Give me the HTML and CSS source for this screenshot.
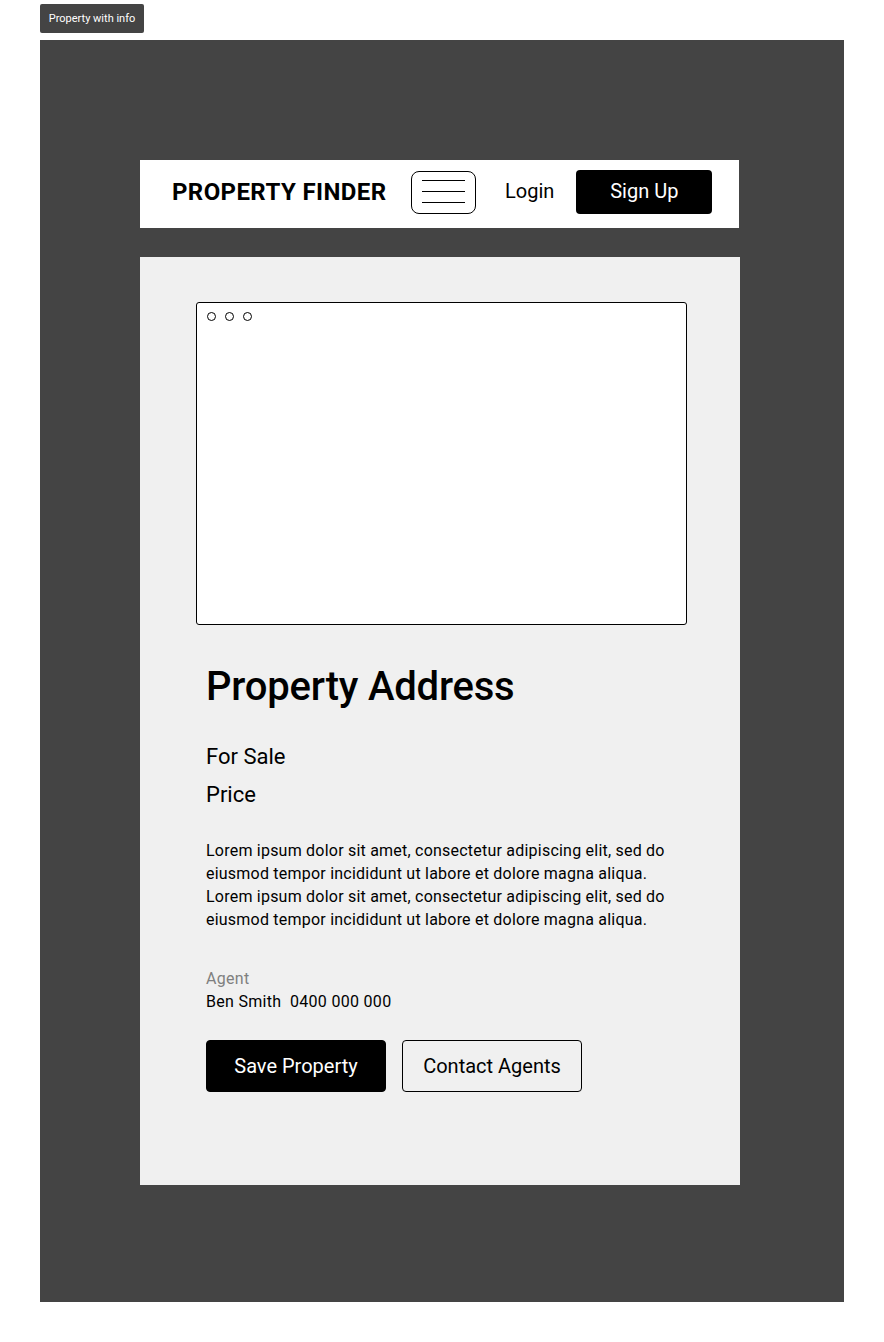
FILE: index.html
```html
<!DOCTYPE html>
<html lang="en">

<head>
  <meta charset="UTF-8" />
  <title>Property with info</title>
  <link rel="stylesheet" href="styles.css">
</head>

<body>
  <div class="tag">Property with info</div>
  <div class="frame">
    <!-- top bar -->
    <div class="header">
      <div class="logo">PROPERTY FINDER</div>
      <div class="menu">
        <span></span><span></span><span></span>
      </div>
      <div class="login">Login</div>
      <div class="signup">Sign Up</div>
    </div>

    <!-- property card -->
    <div class="card">
      <div class="photo">
        <div class="dots"><i></i><i></i><i></i></div>
      </div>
      <div class="info">
        <h1 class="title">Property Address</h1>
        <p class="status">For Sale</p>
        <p class="price">Price</p>
        <p class="desc">Lorem ipsum dolor sit amet, consectetur adipiscing elit, sed do eiusmod tempor incididunt ut labore et dolore magna aliqua.<br>Lorem ipsum dolor sit amet, consectetur adipiscing elit, sed do eiusmod tempor incididunt ut labore et dolore magna aliqua.</p>
        <p class="agent-label">Agent</p>
        <p class="agent">Ben Smith&nbsp; 0400 000 000</p>
        <div class="actions">
          <div class="btn btn-dark">Save Property</div>
          <div class="btn btn-line">Contact Agents</div>
        </div>
      </div>
    </div>
  </div>
</body>

</html>
```

FILE: styles.css
```css
* {
  padding: 0;
  margin: 0;
  box-sizing: border-box;
}

body {
  font-family: Roboto, "Liberation Sans", sans-serif;
  color: #000;
  background: #fff;
}

.tag {
  width: 104px;
  height: 29px;
  margin: 4px 0 0 40px;
  background: #444;
  border-radius: 2px;
  color: #fff;
  font-size: 11px;
  line-height: 29px;
  text-align: center;
}

.frame {
  width: 804px;
  height: 1262px;
  margin: 7px 0 0 40px;
  padding: 120px 0 0 100px;
  background: #444;
}

/* header */
.header {
  width: 599px;
  height: 68px;
  background: #fff;
  display: flex;
  align-items: center;
  padding: 0 0 4px 32px;
}

.logo {
  font-size: 24px;
  font-weight: bold;
  letter-spacing: 0.4px;
  width: 239px;
  white-space: nowrap;
}

.menu {
  width: 65px;
  height: 43px;
  border: 1.5px solid #000;
  border-radius: 8px;
  display: flex;
  flex-direction: column;
  align-items: center;
  padding-top: 8px;
  gap: 10px;
}

.menu span {
  display: block;
  width: 43px;
  height: 1px;
  background: #000;
}

.login {
  margin-left: 29px;
  font-size: 20px;
  margin-top: -3px;
}

.signup {
  width: 136px;
  height: 44px;
  margin-left: 22px;
  background: #000;
  border-radius: 4px;
  color: #fff;
  font-size: 20px;
  line-height: 42px;
  text-align: center;
}

/* card */
.card {
  width: 600px;
  height: 928px;
  margin-top: 29px;
  background: #f0f0f0;
  padding: 45px 0 0 56px;
}

.photo {
  width: 491px;
  height: 323px;
  background: #fff;
  border: 1px solid #000;
  border-radius: 3px;
}

.dots {
  display: flex;
  gap: 9px;
  padding: 9px 0 0 10px;
}

.dots i {
  display: block;
  width: 9px;
  height: 9px;
  border: 1.3px solid #000;
  border-radius: 50%;
}

.info {
  padding-left: 10px;
  width: 490px;
}

.title {
  margin-top: 38px;
  font-size: 40px;
  font-weight: 500;
  letter-spacing: -0.2px;
  line-height: 47px;
}

.status {
  margin-top: 34px;
  font-size: 22px;
  line-height: 26px;
}

.price {
  margin-top: 12px;
  font-size: 22px;
  line-height: 26px;
}

.desc {
  margin-top: 31px;
  font-size: 16px;
  letter-spacing: 0.22px;
  line-height: 23px;
}

.agent-label {
  margin-top: 36px;
  font-size: 16px;
  letter-spacing: 0.3px;
  line-height: 23px;
  color: #7f7f7f;
}

.agent {
  font-size: 16px;
  letter-spacing: 0.3px;
  line-height: 23px;
}

.actions {
  display: flex;
  gap: 16px;
  margin-top: 27px;
}

.btn {
  width: 180px;
  height: 52px;
  border-radius: 4px;
  font-size: 20px;
  line-height: 50px;
  text-align: center;
  border: 1px solid #000;
}

.btn-dark {
  background: #000;
  color: #fff;
}

.btn-line {
  background: transparent;
}
```
